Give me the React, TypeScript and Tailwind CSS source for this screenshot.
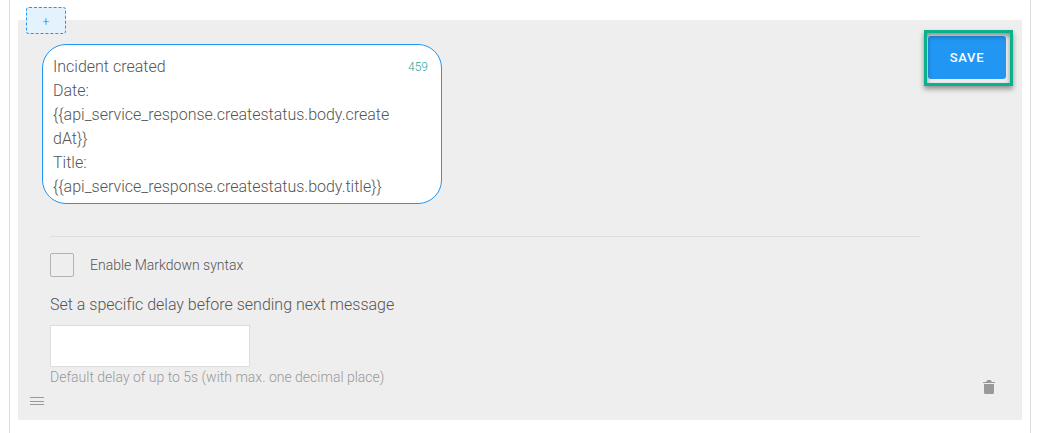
import { useState } from 'react';

const initialMessage = [
  'Incident created',
  'Date: {{api_service_response.createstatus.body.createdAt}}',
  'Title: {{api_service_response.createstatus.body.title}}',
].join('\n');

const MESSAGE_LIMIT = 590;

function DragIcon() {
  return (
    <svg width="14" height="9" viewBox="0 0 14 9" fill="none" stroke="#999999" aria-hidden="true">
      <path d="M0 .5h14M0 4.5h14M0 7.5h14" />
    </svg>
  );
}

function TrashIcon() {
  return (
    <svg width="12" height="14" viewBox="0 0 12 14" fill="#999999" aria-hidden="true">
      <path d="M0 2h3l1.5-2h3L9 2h3v1H0zM1 4h10v8.5a1.5 1.5 0 0 1-1.5 1.5h-7A1.5 1.5 0 0 1 1 12.5z" />
    </svg>
  );
}

export default function App() {
  const [message, setMessage] = useState(initialMessage);
  const [markdown, setMarkdown] = useState(false);
  const [delay, setDelay] = useState('');

  return (
    <div className="min-h-screen bg-white font-[Roboto,sans-serif] font-light text-[#555555]">
      <main className="mr-3.5 ml-[9px] min-h-screen border-x border-[#dddddd] px-2 pt-5">
        <section className="relative flex bg-[#eeeeee] pt-2.5">
          <button
            type="button"
            aria-label="Add message"
            className="absolute -top-[13px] left-2 flex h-[27px] w-10 items-center justify-center rounded-[3px] border border-dashed border-[#2196f3] bg-[#e3f2fd] pt-0.5 text-xs font-light text-[#1976d2]"
          >
            +
          </button>

          <div className="min-w-0 flex-1 pt-3.5 pb-3.5">
            <div className="pl-6">
              <div className="relative h-40 max-w-[400px]">
                <textarea
                  aria-label="Message text"
                  value={message}
                  onChange={(e) => setMessage(e.target.value)}
                  spellCheck={false}
                  className="block h-full w-full resize-none overflow-hidden rounded-3xl border border-[#2196f3] bg-white py-2.5 pr-11 pl-2.5 text-base leading-6 outline-none"
                />
                <span className="absolute top-[15px] right-3.5 text-xs leading-4 text-[#26a69a]">
                  {MESSAGE_LIMIT - message.length}
                </span>
              </div>
            </div>

            <div className="pl-8">
              <hr className="mt-8 border-[#dddddd]" />
              <label className="mt-4 flex items-center gap-4 text-sm leading-6">
                <input
                  type="checkbox"
                  checked={markdown}
                  onChange={(e) => setMarkdown(e.target.checked)}
                  className="size-6 appearance-none rounded-xs border border-[#b3b3b3] checked:bg-[#2196f3]"
                />
                Enable Markdown syntax
              </label>
              <label htmlFor="delay" className="mt-4 block text-base leading-6">
                Set a specific delay before sending next message
              </label>
              <input
                id="delay"
                type="text"
                inputMode="decimal"
                aria-describedby="delay-hint"
                value={delay}
                onChange={(e) => setDelay(e.target.value)}
                className="mt-2 block h-[42px] w-[200px] border border-[#dddddd] bg-white px-2.5 text-base outline-none"
              />
              <p id="delay-hint" className="text-sm leading-5 text-[#999999]">
                Default delay of up to 5s (with max. one decimal place)
              </p>
            </div>

            <div className="pt-2.5 pl-3">
              <button type="button" aria-label="Reorder message" className="block">
                <DragIcon />
              </button>
            </div>
          </div>

          <div className="ml-1 flex shrink-0 flex-col items-end justify-between pr-[9px] pb-[26px]">
            <div className="relative border-3 border-[#0cb08d] pt-[3px] pr-1 pb-1 pl-px shadow-[0_3px_5px_rgba(0,0,0,0.4)] after:pointer-events-none after:absolute after:inset-0 after:shadow-[inset_0_3px_5px_rgba(0,0,0,0.4)]">
              <button
                type="button"
                className="block h-[43px] w-[78px] rounded-[3px] bg-[#2196f3] text-[13px] font-medium tracking-wider text-white"
              >
                SAVE
              </button>
            </div>
            <button type="button" aria-label="Delete message" className="mr-[18px] block">
              <TrashIcon />
            </button>
          </div>
        </section>
      </main>
    </div>
  );
}
